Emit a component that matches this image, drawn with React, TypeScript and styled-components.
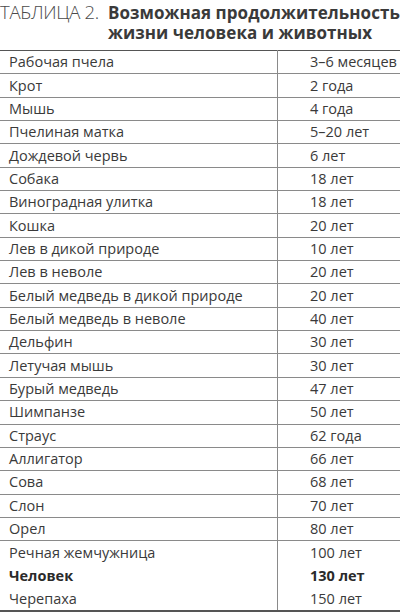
import React from "react";
import styled, { createGlobalStyle } from "styled-components";

const GlobalStyle = createGlobalStyle`
  html, body {
    margin: 0;
    padding: 0;
    background: #ffffff;
  }
  body {
    width: 400px;
    height: 614px;
    overflow: hidden;
    font-family: "Open Sans", "Liberation Sans", sans-serif;
    color: #333;
  }
`;

const rows: { name: string; span: string; bold?: boolean }[] = [
  { name: "Рабочая пчела", span: "3–6 месяцев" },
  { name: "Крот", span: "2 года" },
  { name: "Мышь", span: "4 года" },
  { name: "Пчелиная матка", span: "5–20 лет" },
  { name: "Дождевой червь", span: "6 лет" },
  { name: "Собака", span: "18 лет" },
  { name: "Виноградная улитка", span: "18 лет" },
  { name: "Кошка", span: "20 лет" },
  { name: "Лев в дикой природе", span: "10 лет" },
  { name: "Лев в неволе", span: "20 лет" },
  { name: "Белый медведь в дикой природе", span: "20 лет" },
  { name: "Белый медведь в неволе", span: "40 лет" },
  { name: "Дельфин", span: "30 лет" },
  { name: "Летучая мышь", span: "30 лет" },
  { name: "Бурый медведь", span: "47 лет" },
  { name: "Шимпанзе", span: "50 лет" },
  { name: "Страус", span: "62 года" },
  { name: "Аллигатор", span: "66 лет" },
  { name: "Сова", span: "68 лет" },
  { name: "Слон", span: "70 лет" },
  { name: "Орел", span: "80 лет" },
  { name: "Речная жемчужница", span: "100 лет" },
  { name: "Человек", span: "130 лет", bold: true },
  { name: "Черепаха", span: "150 лет" },
];

const Page = styled.div`
  width: 400px;
`;

const Heading = styled.div`
  display: flex;
  align-items: flex-start;
  height: 50px;
  white-space: nowrap;
  overflow: hidden;
`;

const Label = styled.span`
  font-size: 18.5px;
  font-weight: 300;
  color: #4a4a4a;
  line-height: 22px;
  padding-top: 1px;
  width: 108px;
  flex-shrink: 0;
  letter-spacing: -0.3px;
`;

const Caption = styled.h2`
  margin: 0;
  font-size: 17px;
  font-weight: 700;
  color: #3a3a3a;
  line-height: 20px;
  padding-top: 3px;
  letter-spacing: 0.05px;
`;

const Table = styled.table`
  width: 400px;
  border-collapse: collapse;
  border-top: 1.5px solid #555;
  border-bottom: 2.5px solid #555;
`;

const Row = styled.tr<{ $bold?: boolean }>`
  height: 23.35px;
  font-size: 14.5px;
  font-weight: ${(p) => (p.$bold ? 700 : 400)};
  color: ${(p) => (p.$bold ? "#2a2a2a" : "#3a3a3a")};
  & + & td {
    border-top: 1px solid #8a8a8a;
  }
`;

const Name = styled.td`
  width: 268px;
  padding: 0 0 0 9px;
  line-height: 22px;
  border-right: 1px solid #8a8a8a;
`;

const Span = styled.td`
  padding: 0 0 0 32px;
  line-height: 22px;
  white-space: nowrap;
`;

export default function App() {
  return (
    <Page>
      <GlobalStyle />
      <Heading>
        <Label>ТАБЛИЦА 2.</Label>
        <Caption>
          Возможная продолжительность
          <br />
          жизни человека и животных
        </Caption>
      </Heading>
      <Table>
        <tbody>
          {rows.map((r) => (
            <Row key={r.name} $bold={r.bold}>
              <Name>{r.name}</Name>
              <Span>{r.span}</Span>
            </Row>
          ))}
        </tbody>
      </Table>
    </Page>
  );
}
